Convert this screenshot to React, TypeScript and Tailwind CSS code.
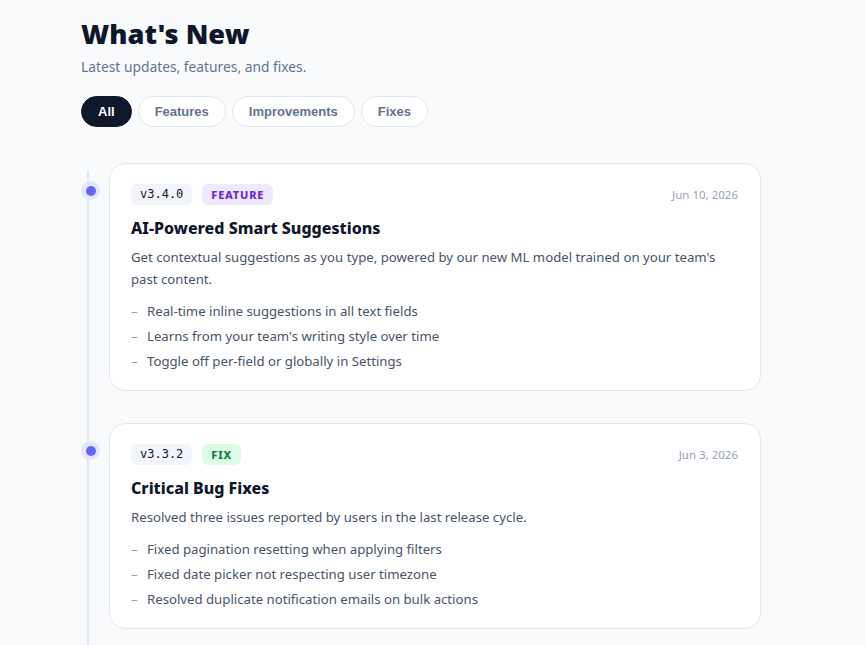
import React from "react";

type Entry = {
  version: string;
  tag: "FEATURE" | "FIX";
  date: string;
  title: string;
  desc: string;
  items: string[];
};

const entries: Entry[] = [
  {
    version: "v3.4.0",
    tag: "FEATURE",
    date: "Jun 10, 2026",
    title: "AI-Powered Smart Suggestions",
    desc: "Get contextual suggestions as you type, powered by our new ML model trained on your team's past content.",
    items: [
      "Real-time inline suggestions in all text fields",
      "Learns from your team's writing style over time",
      "Toggle off per-field or globally in Settings",
    ],
  },
  {
    version: "v3.3.2",
    tag: "FIX",
    date: "Jun 3, 2026",
    title: "Critical Bug Fixes",
    desc: "Resolved three issues reported by users in the last release cycle.",
    items: [
      "Fixed pagination resetting when applying filters",
      "Fixed date picker not respecting user timezone",
      "Resolved duplicate notification emails on bulk actions",
    ],
  },
];

export default function App() {
  return (
    <div className="min-h-screen w-full bg-[#f8fafc] font-['Noto_Sans',sans-serif] overflow-hidden">
      <div className="pl-[81px] pt-[15px] w-[761px]">
        <h1 className="text-[27.2px] leading-[38px] font-black text-[#0f172a]">
          What's New
        </h1>
        <p className="mt-[4px] text-[13.8px] leading-[20px] text-[#64748b]">
          Latest updates, features, and fixes.
        </p>
        <div className="mt-[19px] flex gap-[6px] font-['Liberation_Sans',Arial,sans-serif]">
          <button className="h-[31px] px-[16px] rounded-full bg-[#0f172a] text-white text-[13px] font-bold border border-[#0f172a]">
            All
          </button>
          <button className="h-[31px] px-[16px] rounded-full bg-white text-[#64748b] text-[13px] font-bold border border-[#e2e8f0]">
            Features
          </button>
          <button className="h-[31px] px-[16px] rounded-full bg-white text-[#64748b] text-[13px] font-bold border border-[#e2e8f0]">
            Improvements
          </button>
          <button className="h-[31px] px-[16px] rounded-full bg-white text-[#64748b] text-[13px] font-bold border border-[#e2e8f0]">
            Fixes
          </button>
        </div>

        <div className="relative mt-[36px] pl-[28px]">
          <div className="absolute left-[6px] top-[7px] bottom-[-200px] w-[2px] bg-[#e2e8f0]" />
          <div className="flex flex-col gap-[32px]">
            {entries.map((e) => (
              <div key={e.version} className="relative">
                <div className="absolute left-[-28px] top-[18px] w-[19px] h-[19px] rounded-full bg-[#e0e7ff] flex items-center justify-center">
                  <div className="w-[10px] h-[10px] rounded-full bg-[#6366f1]" />
                </div>
                <div className="bg-white border border-[#e2e8f0] rounded-[16px] px-[21px] pt-[20px] pb-[18px]">
                  <div className="flex items-center">
                    <span className="h-[21px] px-[9px] rounded-[6px] bg-[#f1f5f9] text-[#0f172a] text-[12px] leading-[21px] font-['DejaVu_Sans_Mono',monospace]">
                      {e.version}
                    </span>
                    <span
                      className={
                        e.tag === "FEATURE"
                          ? "ml-[10px] h-[21px] px-[9px] rounded-[6px] bg-[#ede9fe] text-[#6d28d9] text-[11px] leading-[21px] font-extrabold tracking-[0.8px]"
                          : "ml-[10px] h-[21px] px-[9px] rounded-[6px] bg-[#dcfce7] text-[#15803d] text-[11px] leading-[21px] font-extrabold tracking-[0.8px]"
                      }
                    >
                      {e.tag}
                    </span>
                    <span className="ml-auto mr-[1px] text-[11.5px] text-[#94a3b8]">{e.date}</span>
                  </div>
                  <h2 className="mt-[11px] text-[16px] leading-[24px] font-extrabold text-[#0f172a]">
                    {e.title}
                  </h2>
                  <p className="mt-[6px] text-[13.2px] leading-[22px] text-[#475569]">{e.desc}</p>
                  <ul className="mt-[11px] flex flex-col gap-[4px]">
                    {e.items.map((it) => (
                      <li key={it} className="flex text-[13.2px] leading-[21px] text-[#475569]">
                        <span className="w-[16px] text-[#94a3b8]">–</span>
                        <span>{it}</span>
                      </li>
                    ))}
                  </ul>
                </div>
              </div>
            ))}
          </div>
        </div>
      </div>
    </div>
  );
}
